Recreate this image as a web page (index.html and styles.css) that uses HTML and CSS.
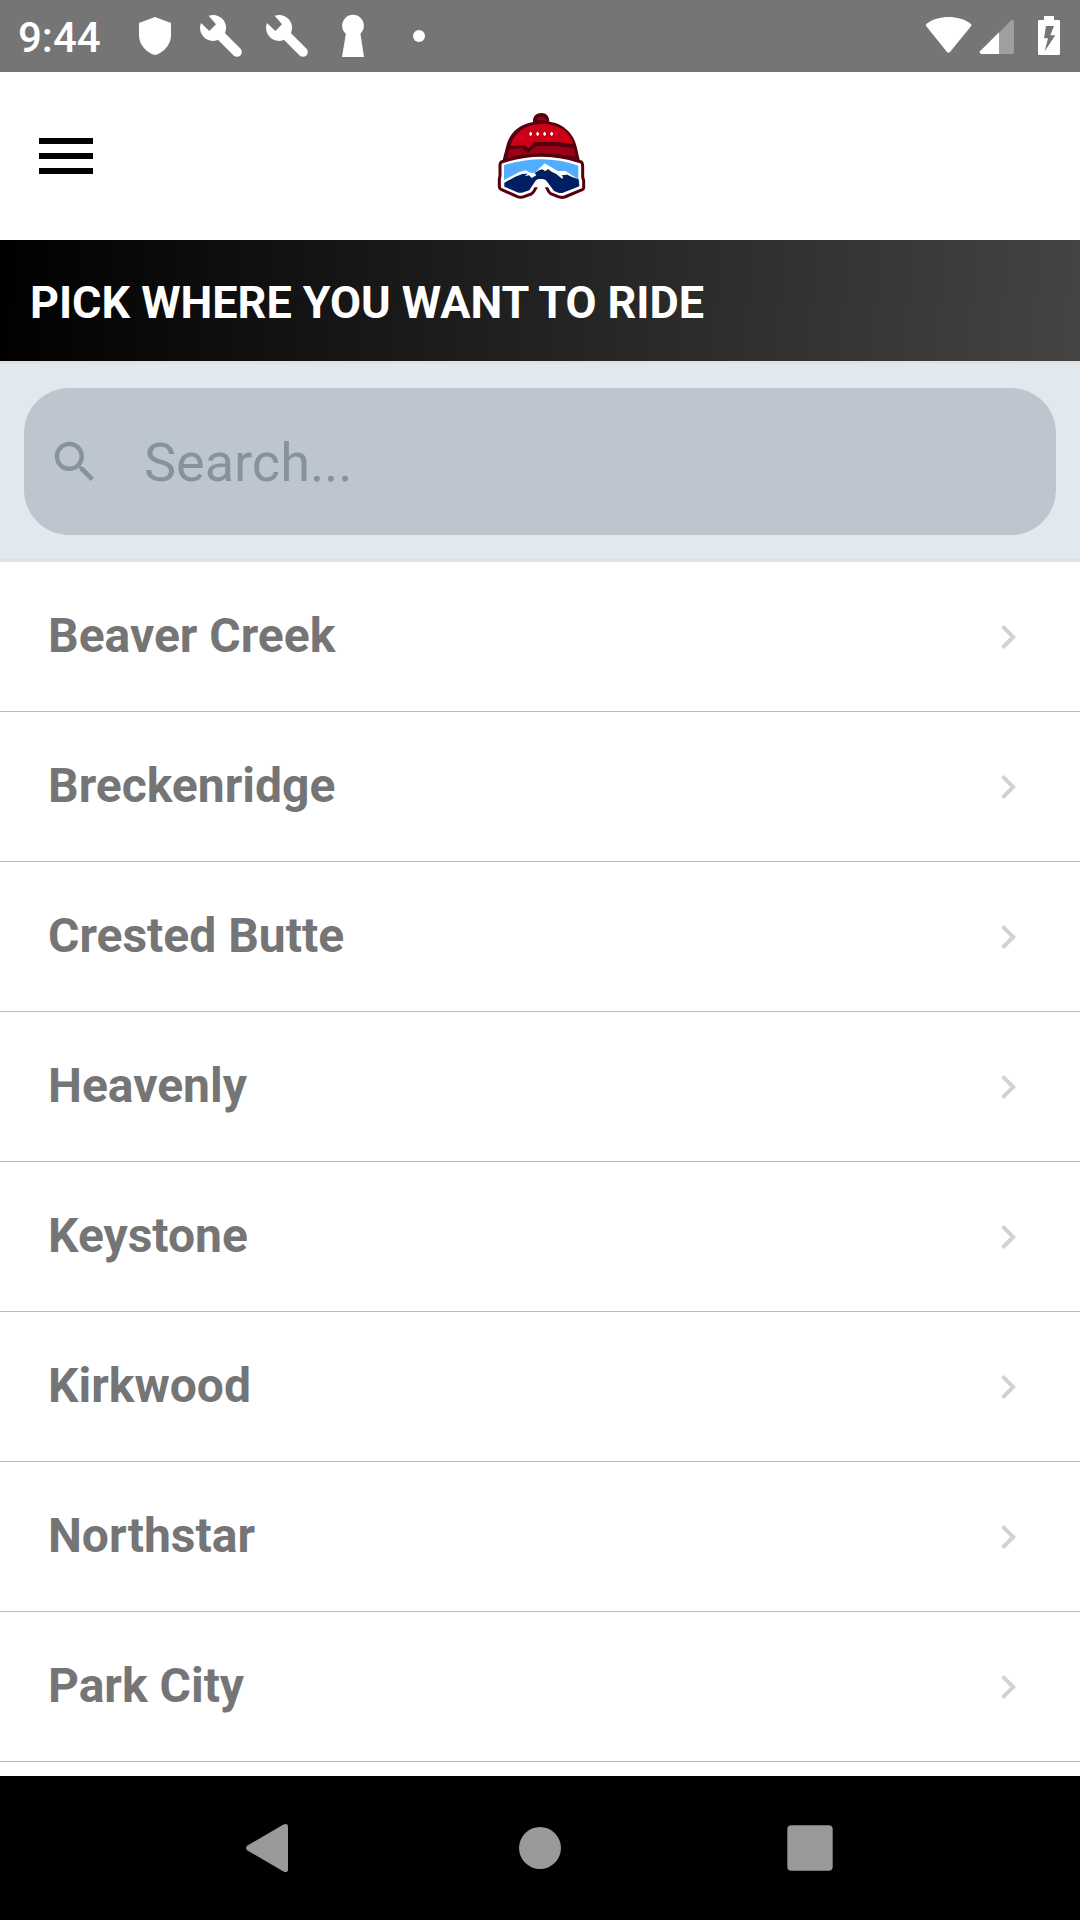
FILE: index.html
```html
<!DOCTYPE html>
<html lang="en">
<head>
<meta charset="utf-8">
<title>Pick where you want to ride</title>
<link rel="stylesheet" href="styles.css">
</head>
<body>
<svg class="defs" width="0" height="0" aria-hidden="true">
  <symbol id="wrench" viewBox="564 0 198 216">
    <path fill="#fff" d="M626 47A39 39 0 1 1 603 69L628 93L648 73Z"/>
    <path stroke="#fff" stroke-width="29" stroke-linecap="round" d="M655 100L711 156"/>
  </symbol>
  <symbol id="chevron" viewBox="0 0 24 24">
    <path fill="#d1d1d6" d="M10 6L8.59 7.41 13.17 12l-4.58 4.59L10 18l6-6z"/>
  </symbol>
</svg>
<div class="screen">
  <div class="status">
    <span class="clock">9:44</span>
    <svg class="slot" viewBox="366 0 198 216"><path fill="#fff" d="M465 51L513 69V105C513 135 491 158 465 165C439 158 417 135 417 105V69Z"/></svg>
    <svg class="slot"><use href="#wrench"/></svg>
    <svg class="slot"><use href="#wrench"/></svg>
    <svg class="slot" viewBox="960 0 198 216"><circle cx="1059" cy="77" r="32.5" fill="#fff"/><path fill="#fff" d="M1039 93H1080L1092 171H1026Z"/></svg>
    <svg class="slot" viewBox="1158 0 198 216"><circle cx="1257" cy="108" r="18" fill="#fff"/></svg>
    <svg class="system" viewBox="60 0 480 216">
      <path fill="#fff" d="M79 72C98 57 122 51 146 51S194 57 213 72Q216 75 213 79L150 156Q146 161 141 156L79 79Q76 75 79 72Z"/>
      <path fill="#9f9f9f" d="M297 98L333 61Q342 56 342 65V157Q342 162 337 162H297Z"/>
      <path fill="#fff" d="M297 97V162H243Q238 160 240 154Z"/>
      <path fill="#fff" fill-rule="evenodd" d="M432 48H462V60H476Q480 60 480 64V161Q480 165 476 165H418Q414 165 414 161V64Q414 60 418 60H432ZM438 78L432 115H444L434 154L466 106H451L462 78Z"/>
    </svg>
  </div>
  <header class="header">
    <svg class="menu" viewBox="0 0 54 36"><path d="M0 0h54v6H0zM0 15h54v6H0zM0 30h54v6H0z"/></svg>
    <svg class="logo" viewBox="0 0 360 330">
      <path fill="#56000b" d="M159 66C158 48 169 39 184 39S208 49 208 65C250 70 283 102 291 144L299 180H68L79 138C87 101 116 73 159 66Z"/>
      <path fill="#9b0019" d="M169 61Q170 50 184 50T199 62Q184 58 169 61Z"/>
      <path fill="#ce0018" d="M91 138C103 99 134 73 184 72S271 94 279 132L234 126H163L145 145L134 135Z"/>
      <path fill="#9b0019" d="M88 148L126 145L144 160L169 138H230L281 145L287 170L235 163L175 160L112 166L81 177Z"/>
      <path fill="#fff" d="M148 99l4-4 4 4v5l-4 4-4-4zM169 99l4-4 4 4v5l-4 4-4-4zM190 99l4-4 4 4v5l-4 4-4-4zM211 99l4-4 4 4v5l-4 4-4-4z"/>
      <path fill="#fff" stroke="#56000b" stroke-width="9" stroke-linejoin="round" d="M64 186Q124 166 184 166T304 186Q308 189 308 200V231L311 242V263Q311 267 307 269L254 291Q244 294 232 289L212 281Q208 278 206 274L196 255Q194 251 189 251H179Q174 251 172 255L163 272Q160 278 154 282L132 290Q122 294 112 290L63 268Q58 266 58 260V238L60 227V195Q60 189 64 186Z"/>
      <path fill="#52adff" d="M72 196Q128 178 184 178T295 197V236L299 248H72Z"/>
      <path fill="#fff" d="M72 240L118 216L137 211L151 218L164 219L194 190L233 213H257L298 240V262H72Z"/>
      <path fill="#001f63" d="M73 248L106 230L127 222L143 221L134 229L147 226L155 234L169 226L164 219L177 211L187 208L196 214L204 207L216 216L228 221L247 237L249 231L245 226L262 224L276 231L296 238L298 259L247 279H237L222 273L202 246Q198 239 189 237H175Q168 238 164 246L148 271L126 278H115L73 260Z"/>
    </svg>
  </header>
  <h1 class="banner">PICK WHERE YOU WANT TO RIDE</h1>
  <div class="search">
    <label class="field">
      <svg class="search-icon" viewBox="0 0 24 24"><path fill="#86939e" d="M15.5 14h-.79l-.28-.27C15.41 12.59 16 11.11 16 9.5 16 5.91 13.09 3 9.5 3S3 5.91 3 9.5 5.91 16 9.5 16c1.61 0 3.09-.59 4.23-1.57l.27.28v.79l5 4.99L20.49 19l-4.99-5zm-6 0C7.01 14 5 11.99 5 9.5S7.01 5 9.5 5 14 7.01 14 9.5 11.99 14 9.5 14z"/></svg>
      <input class="input" type="text" placeholder="Search...">
    </label>
  </div>
  <ul class="list">
    <li class="row">Beaver Creek<svg class="chevron"><use href="#chevron"/></svg></li>
    <li class="row">Breckenridge<svg class="chevron"><use href="#chevron"/></svg></li>
    <li class="row">Crested Butte<svg class="chevron"><use href="#chevron"/></svg></li>
    <li class="row">Heavenly<svg class="chevron"><use href="#chevron"/></svg></li>
    <li class="row">Keystone<svg class="chevron"><use href="#chevron"/></svg></li>
    <li class="row">Kirkwood<svg class="chevron"><use href="#chevron"/></svg></li>
    <li class="row">Northstar<svg class="chevron"><use href="#chevron"/></svg></li>
    <li class="row">Park City<svg class="chevron"><use href="#chevron"/></svg></li>
  </ul>
  <nav class="nav">
    <svg class="key" viewBox="0 0 60 60"><path fill="#999" d="M7.500 27.500L43.500 6.500Q48 4.500 48 9V51Q48 55.500 43.500 53.500L7.500 32.500Q4.500 30 7.500 27.500Z"/></svg>
    <svg class="key" viewBox="0 0 60 60"><circle cx="30" cy="30" r="21" fill="#999"/></svg>
    <svg class="key" viewBox="0 0 60 60"><rect x="7.300" y="7.300" width="45.400" height="45.400" rx="4" fill="#999"/></svg>
  </nav>
</div>
</body>
</html>
```
FILE: styles.css
```css
* { box-sizing: border-box; }
body { margin: 0; font-family: Roboto, sans-serif; background: #fff; }
svg { display: block; flex: none; }
.defs { position: absolute; }
.screen { display: flex; flex-direction: column; width: 1080px; height: 1920px; overflow: hidden; }

.status { display: flex; flex: none; height: 72px; background: #757575; color: #fff; }
.clock { width: 122px; padding-left: 18px; font-size: 42px; font-weight: 500; line-height: 76px; }
.slot { width: 66px; height: 72px; }
.system { width: 160px; height: 72px; margin-left: auto; }

.header { display: grid; grid-template-columns: 1fr 120px 1fr; align-items: center; flex: none; height: 168px; padding: 0 39px; background: #fff; }
.menu { width: 54px; height: 36px; }
.logo { width: 120px; height: 110px; margin-bottom: 2px; }

.banner { flex: none; height: 121px; margin: 0; padding-left: 30px; background: linear-gradient(93.5deg, #000, #444); color: #fff; font-size: 45px; font-weight: 700; line-height: 126px; letter-spacing: -0.03px; }

.search { flex: none; height: 201px; padding: 24px; border: solid #e1e1e1; border-width: 3px 0; background: #e1e8ee; }
.field { display: flex; align-items: center; gap: 42px; height: 147px; padding: 0 24px; border-radius: 45px; background: #bdc6cf; }
.search-icon { width: 54px; height: 54px; }
.input { flex: 1; min-width: 0; height: 147px; padding: 2px 0 0; border: 0; outline: 0; background: none; color: #86939e; font: 400 54px Roboto, sans-serif; }
.input::placeholder { color: #86939e; opacity: 1; }

.list { flex: 1; min-height: 0; margin: 0; padding: 0; list-style: none; }
.row { display: flex; align-items: center; justify-content: space-between; height: 150px; padding: 0 48px 3px; border-bottom: 1px solid #bcbbc1; color: #757575; font-size: 48px; font-weight: 700; }
.chevron { width: 48px; height: 48px; margin-top: 3px; }

.nav { display: flex; flex: none; justify-content: center; align-items: center; gap: 210px; height: 144px; background: #000; }
.key { width: 60px; height: 60px; }
```
